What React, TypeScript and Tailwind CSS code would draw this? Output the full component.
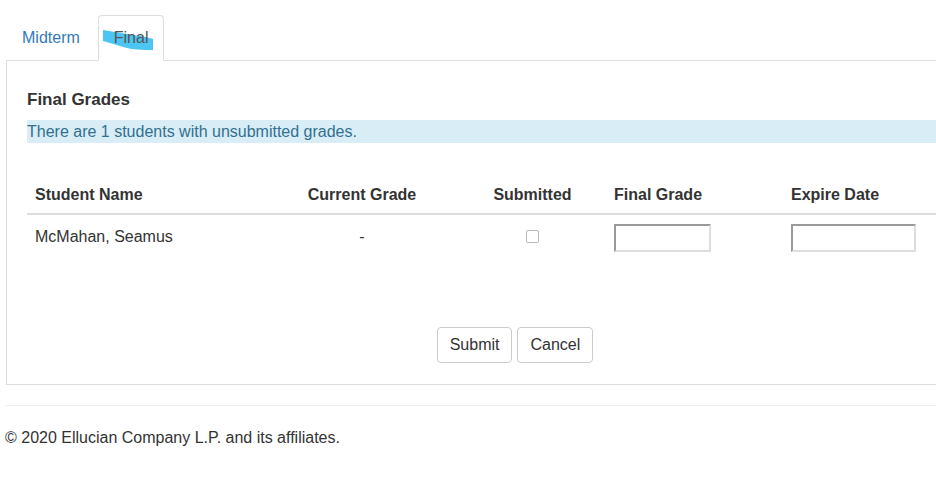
import React from 'react';

const font = "font-['Liberation_Sans',Arial,sans-serif]";

function Tabs() {
  return (
    <ul className="flex border-b border-[#ddd]">
      <li className="mr-[2px] border border-transparent px-[15px] py-[10px] leading-[23px] text-[#337ab7]">
        Midterm
      </li>
      <li className="relative mb-[-1px] rounded-t-[4px] border border-[#ddd] border-b-white bg-white px-[15px] py-[10px] leading-[23px] text-[#555]">
        {/* highlighter scribble over the active tab */}
        <svg className="absolute left-0 top-0" width="66" height="44" viewBox="0 0 66 44">
          <path d="M4 14 L47 21 L54 23 L54 34 Q36 34 28 32 L4 25 Z" fill="#4cc5f2" />
        </svg>
        <span className="relative">Final</span>
      </li>
    </ul>
  );
}

function GradeInput({ width }: { width: string }) {
  return (
    <input
      type="text"
      className={`${width} h-[28px] border-2 border-t-[#999] border-l-[#999] border-b-[#ddd] border-r-[#ddd] bg-white outline-none`}
    />
  );
}

function GradesTable() {
  return (
    <div className="mt-[34px]">
      <div className="grid grid-cols-[274px_122px_183px_177px_1fr] whitespace-nowrap border-b-2 border-[#ddd] font-bold leading-[20px]">
        <div className="px-[8px] py-[8px]">Student Name</div>
        <div className="flex justify-center py-[8px]">Current Grade</div>
        <div className="py-[8px] pl-[44px] pr-[8px] text-center">Submitted</div>
        <div className="px-[8px] py-[8px]">Final Grade</div>
        <div className="px-[8px] py-[8px]">Expire Date</div>
      </div>
      <div className="grid grid-cols-[274px_122px_183px_177px_1fr] items-start py-[9px] leading-[23px]">
        <div className="px-[8px] pt-[1px]">McMahan, Seamus</div>
        <div className="px-[8px] pt-[1px] text-center">-</div>
        <div className="flex justify-center pl-[44px] pr-[8px] pt-[6px]">
          <span className="block h-[13px] w-[13px] rounded-[2px] border border-[#bbb] bg-white" />
        </div>
        <div className="px-[8px]">
          <GradeInput width="w-[97px]" />
        </div>
        <div className="px-[8px]">
          <GradeInput width="w-[125px]" />
        </div>
      </div>
    </div>
  );
}

export default function App() {
  return (
    <div className="h-[478px] w-[936px] overflow-hidden bg-white">
      <div className={`${font} w-[1030px] pt-[15px] text-[16px] text-[#333]`}>
        <div className="mx-[6px]">
          <Tabs />
          <div className="border border-t-0 border-[#ddd] px-[20px] pb-[21px] pt-[27px]">
            <h2 className="text-[17px] font-bold leading-[24px]">Final Grades</h2>
            <div className="mt-[8px] bg-[#d9edf7] leading-[23px] text-[#31708f]">
              There are 1 students with unsubmitted grades.
            </div>
            <GradesTable />
            <div className="mt-[66px] flex justify-center gap-[5px]">
              <button className="h-[36px] rounded-[4px] border border-[#ccc] bg-white px-[12px] text-[#333]">
                Submit
              </button>
              <button className="h-[36px] rounded-[4px] border border-[#ccc] bg-white px-[12px] text-[#333]">
                Cancel
              </button>
            </div>
          </div>
        </div>
        <div className="mx-[5px] mt-[20px] border-t border-[#eee]" />
        <p className="mt-[20px] px-[5px] leading-[23px]">© 2020 Ellucian Company L.P. and its affiliates.</p>
      </div>
    </div>
  );
}
